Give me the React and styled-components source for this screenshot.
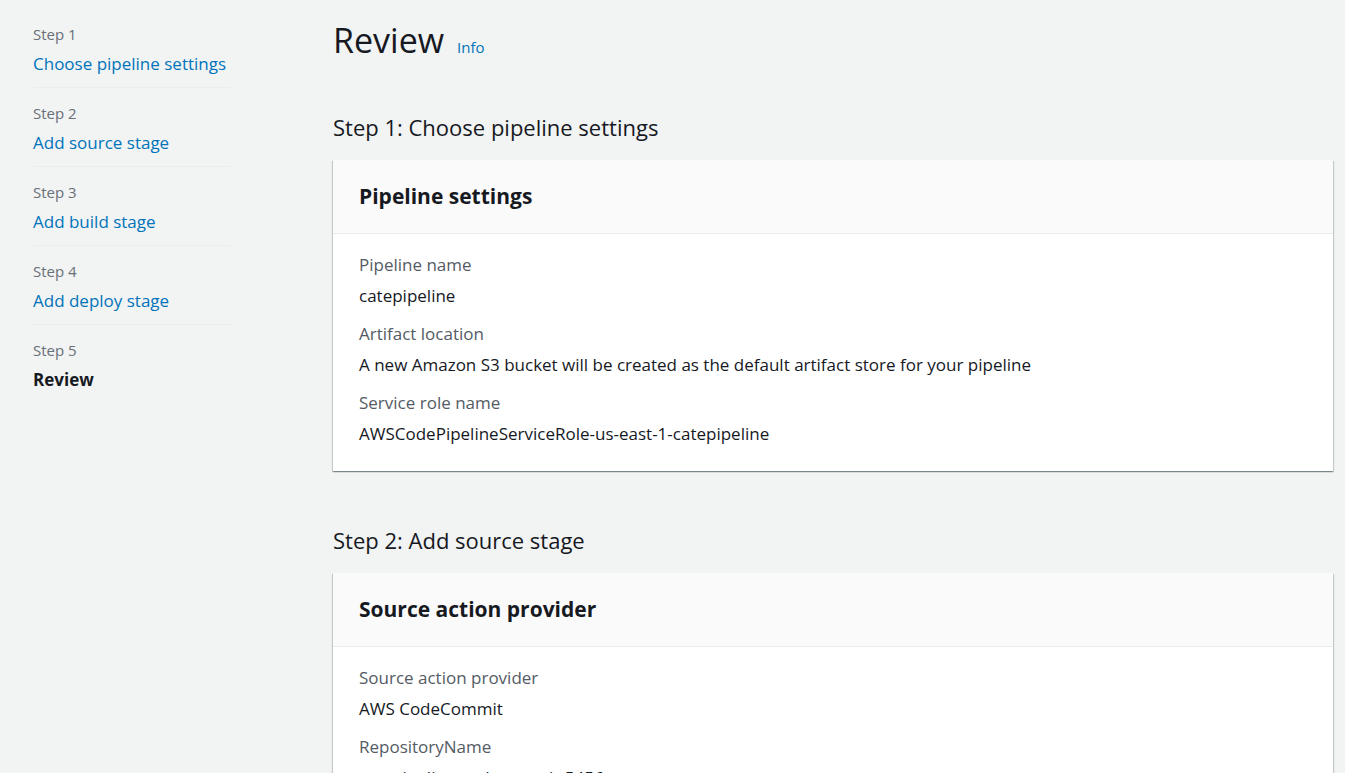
import React from "react";
import styled, { createGlobalStyle } from "styled-components";

const Global = createGlobalStyle`
  html, body { margin: 0; padding: 0; background: #f2f3f3; }
  body { font-family: "Open Sans", "Liberation Sans", sans-serif; color: #16191f; }
  * { box-sizing: border-box; }
`;

const Page = styled.div`
  display: grid;
  grid-template-columns: 333px 1fr;
  height: 773px;
  overflow: hidden;
  padding-right: 12px;
`;

const Nav = styled.nav`
  padding: 24px 0 0 33px;
`;

const NavList = styled.ol`
  list-style: none;
  margin: 0;
  padding: 0;
  width: 198px;
`;

const NavItem = styled.li`
  padding-bottom: 11px;
  margin-bottom: 15px;
  border-bottom: ${(p) => (p.$last ? "none" : "1px solid #eaeded")};
`;

const StepLabel = styled.div`
  font-size: 15px;
  line-height: 20px;
  color: #687078;
  margin-bottom: 8px;
`;

const StepLink = styled.a`
  display: block;
  font-size: 17px;
  line-height: 24px;
  color: ${(p) => (p.$active ? "#16191f" : "#0073bb")};
  font-weight: ${(p) => (p.$active ? 700 : 400)};
  text-decoration: none;
`;

const Main = styled.main`
  padding-top: 20px;
  min-width: 0;
`;

const TitleRow = styled.div`
  display: flex;
  align-items: baseline;
  gap: 13px;
`;

const H1 = styled.h1`
  margin: 0;
  font-size: 34px;
  line-height: 40px;
  font-weight: 400;
  color: #16191f;
`;

const InfoLink = styled.a`
  font-size: 15px;
  color: #0073bb;
  text-decoration: none;
`;

const Section = styled.section`
  margin-top: ${(p) => p.$top}px;
`;

const H2 = styled.h2`
  margin: 0 0 18px;
  font-size: 22px;
  line-height: 30px;
  font-weight: 400;
  color: #16191f;
`;

const Card = styled.div`
  background: #fff;
  box-shadow: 0 1px 1px 0 rgba(0, 28, 36, 0.3), 1px 1px 1px 0 rgba(0, 28, 36, 0.15),
    -1px 1px 1px 0 rgba(0, 28, 36, 0.15);
`;

const CardHeader = styled.div`
  height: 74px;
  display: flex;
  align-items: center;
  padding: 0 26px 1px;
  background: #fafafa;
  border-bottom: 1px solid #eaeded;
`;

const CardTitle = styled.h3`
  margin: 0;
  font-size: 21px;
  line-height: 28px;
  font-weight: 700;
  color: #16191f;
`;

const CardBody = styled.dl`
  margin: 0;
  padding: 20px 26px 26px;
`;

const Field = styled.div`
  & + & { margin-top: 16px; }
`;

const Label = styled.dt`
  font-size: 17px;
  line-height: 22px;
  color: #545b64;
  margin-bottom: 9px;
`;

const Value = styled.dd`
  margin: 0;
  font-size: 17px;
  line-height: 22px;
  color: #16191f;
`;

const steps = [
  "Choose pipeline settings",
  "Add source stage",
  "Add build stage",
  "Add deploy stage",
  "Review",
];

const sections = [
  {
    top: 52,
    heading: "Step 1: Choose pipeline settings",
    title: "Pipeline settings",
    fields: [
      ["Pipeline name", "catepipeline"],
      ["Artifact location", "A new Amazon S3 bucket will be created as the default artifact store for your pipeline"],
      ["Service role name", "AWSCodePipelineServiceRole-us-east-1-catepipeline"],
    ],
  },
  {
    top: 54,
    heading: "Step 2: Add source stage",
    title: "Source action provider",
    fields: [
      ["Source action provider", "AWS CodeCommit"],
      ["RepositoryName", "catepipeline-codecommit-5456"],
      ["BranchName", "master"],
    ],
  },
];

export default function App() {
  return (
    <>
      <Global />
      <Page>
        <Nav>
          <NavList>
            {steps.map((s, i) => (
              <NavItem key={s} $last={i === steps.length - 1}>
                <StepLabel>Step {i + 1}</StepLabel>
                <StepLink $active={i === steps.length - 1}>{s}</StepLink>
              </NavItem>
            ))}
          </NavList>
        </Nav>
        <Main>
          <TitleRow>
            <H1>Review</H1>
            <InfoLink>Info</InfoLink>
          </TitleRow>
          {sections.map((sec) => (
            <Section key={sec.heading} $top={sec.top}>
              <H2>{sec.heading}</H2>
              <Card>
                <CardHeader>
                  <CardTitle>{sec.title}</CardTitle>
                </CardHeader>
                <CardBody>
                  {sec.fields.map(([l, v]) => (
                    <Field key={l}>
                      <Label>{l}</Label>
                      <Value>{v}</Value>
                    </Field>
                  ))}
                </CardBody>
              </Card>
            </Section>
          ))}
        </Main>
      </Page>
    </>
  );
}
